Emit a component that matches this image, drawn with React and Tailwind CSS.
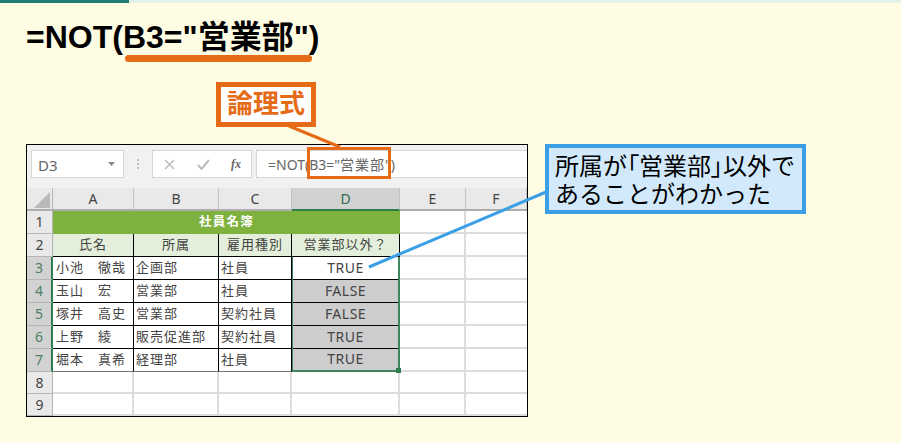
const jp = 'font-["Liberation_Sans","Noto_Sans_CJK_JP",sans-serif]'

const rows = [
  ['小池　徹哉', '企画部', '社員', 'TRUE'],
  ['玉山　宏', '営業部', '社員', 'FALSE'],
  ['塚井　高史', '営業部', '契約社員', 'FALSE'],
  ['上野　綾', '販売促進部', '契約社員', 'TRUE'],
  ['堀本　真希', '経理部', '社員', 'TRUE'],
]

const columns = ['A', 'B', 'C', 'D', 'E', 'F']

function RowHead({ n, active }) {
  return (
    <div className={`flex items-center justify-center pb-[1px] border-b border-[#b5b5b5] text-[14px] ${active ? 'bg-[#d2d2d2] text-[#4f7f64] border-r-2 border-r-[#2f7d4f]' : 'bg-[#e9e9e9] text-[#444] border-r border-r-[#b5b5b5]'}`}>
      {n}
    </div>
  )
}

function Blank({ last }) {
  return <div className={`bg-white border-b-2 border-[#dcdcdc] ${last ? '' : 'border-r-2'}`} />
}

function Sheet() {
  return (
    <div className="grid grid-cols-[26px_81px_85px_73px_108px_66px_61px] grid-rows-[23px_23px_23px_23px_23px_23px_23px_22px_22px] font-['Noto_Sans','Noto_Sans_CJK_JP',sans-serif] text-[13px] text-[#444]">
      {/* row 1 */}
      <RowHead n={1} />
      <div className="col-span-4 flex items-center justify-center pb-[1px] bg-[#7fb13f] font-bold text-white text-[12.5px] tracking-[1.2px]">社員名簿</div>
      <Blank />
      <Blank last />

      {/* row 2 */}
      <RowHead n={2} />
      <div className="flex items-center justify-center pb-[1px] bg-[#e3efda] border-r border-b border-black tracking-[1px]">氏名</div>
      <div className="flex items-center justify-center pb-[1px] bg-[#e3efda] border-r border-b border-black tracking-[1px]">所属</div>
      <div className="flex items-center justify-center pb-[1px] bg-[#e3efda] border-r border-b border-black tracking-[1px]">雇用種別</div>
      <div className="flex items-center justify-center pb-[1px] bg-[#e3efda] border-r border-b border-black tracking-[1px]">営業部以外？</div>
      <Blank />
      <Blank last />

      {/* rows 3-7 */}
      {rows.map((r, i) => (
        <div key={i} className="contents">
          <RowHead n={i + 3} active />
          <div className={`flex items-center pb-[1px] pl-[3px] bg-white border-r border-black tracking-[1px] whitespace-nowrap overflow-hidden ${i === 4 ? 'border-b border-b-[#777]' : 'border-b'}`}>{r[0]}</div>
          <div className={`flex items-center pb-[1px] pl-[2px] bg-white border-r border-black tracking-[1px] whitespace-nowrap overflow-hidden ${i === 4 ? 'border-b border-b-[#777]' : 'border-b'}`}>{r[1]}</div>
          <div className={`flex items-center pb-[1px] pl-[2px] bg-white border-r border-black tracking-[1px] whitespace-nowrap overflow-hidden ${i === 4 ? 'border-b border-b-[#777]' : 'border-b'}`}>{r[2]}</div>
          <div className={`flex items-center justify-center pb-[3px] border-l border-r-2 border-[#3f8560] text-[14px] ${i === 0 ? 'bg-white' : 'bg-[#cdcdcd]'} ${i === 4 ? 'border-b-2' : 'border-b-0'} relative tracking-[0.5px]`}>
            {r[3]}
            {i < 4 && <span className="absolute left-0 right-0 bottom-0 h-px bg-black" />}
            {i === 4 && <span className="absolute right-[-3px] bottom-[-3px] w-[5px] h-[5px] bg-[#2f7d4f]" />}
          </div>
          <Blank />
          <Blank last />
        </div>
      ))}

      {/* rows 8-9 */}
      {[8, 9].map((n) => (
        <div key={n} className="contents">
          <RowHead n={n} />
          <Blank />
          <Blank />
          <Blank />
          <Blank />
          <Blank />
          <Blank last />
        </div>
      ))}
    </div>
  )
}

export default function App() {
  return (
    <div className={`relative w-[901px] h-[443px] overflow-hidden bg-[#fefce3] ${jp}`}>
      {/* top progress strip */}
      <div className="flex h-[3px]">
        <div className="w-[129px] bg-[#1f7f78]" />
        <div className="flex-1 bg-[#e4f3ea]" />
      </div>

      <h1 className="mt-[15px] ml-[26px] text-[32px] leading-[38px] font-bold text-black">=NOT(B3="営業部")</h1>

      {/* underline below the logical test */}
      <div className="absolute left-[125px] top-[55px] w-[187px] h-[7px] rounded-full bg-[#e66b17]" />

      <div className="absolute left-[216px] top-[82px] w-[100px] h-[45px] flex items-center justify-center bg-white border-[5px] border-[#e66b17] text-[26px] font-bold text-[#e66b17]">論理式</div>

      {/* spreadsheet window */}
      <div className="mt-[88px] ml-[26px] w-[502px] h-[273px] border border-black bg-[#f1f1f1] overflow-hidden">
        <div className="flex h-[43px] pt-[5px] items-start">
          <div className="ml-[4px] w-[93px] h-[28px] flex items-center justify-between pl-[6px] pr-[7px] pt-[3px] bg-white border border-[#d6d6d6] text-[15px] font-['Noto_Sans',sans-serif] text-[#666]">
            D3
            <svg className="mb-[3px]" width="8" height="5" viewBox="0 0 8 5"><path d="M0 0h7L3.5 4z" fill="#8a8a8a" /></svg>
          </div>
          <div className="w-[28px] h-[28px] flex flex-col items-center justify-center gap-[2px]">
            <span className="w-[2px] h-[2px] bg-[#c0c0c0]" />
            <span className="w-[2px] h-[2px] bg-[#c0c0c0]" />
            <span className="w-[2px] h-[2px] bg-[#c0c0c0]" />
          </div>
          <div className="w-[100px] h-[28px] flex items-center bg-white border border-[#d6d6d6]">
            <svg className="ml-[11px]" width="11" height="11" viewBox="0 0 11 11"><path d="M1 1l9 9M10 1l-9 9" stroke="#bdbdbd" strokeWidth="1.6" /></svg>
            <svg className="ml-[22px]" width="13" height="11" viewBox="0 0 13 11"><path d="M1 6l3.5 4L12 1" stroke="#bdbdbd" strokeWidth="2" fill="none" /></svg>
            <span className="ml-[21px] font-['Liberation_Serif',serif] italic font-bold text-[12px] text-[#666]">fx</span>
          </div>
          <div className="ml-[4px] flex-1 h-[28px] flex items-center pl-[11px] bg-white border-y border-l border-[#d6d6d6] font-['Noto_Sans','Noto_Sans_CJK_JP',sans-serif] text-[14px] text-[#666] whitespace-nowrap">=NOT(B3="<span className="tracking-[1px]">営業部</span>")</div>
        </div>

        {/* column headers */}
        <div className="flex h-[23px] border-b-2 border-[#aeaeae] bg-[#e9e9e9] font-['Noto_Sans',sans-serif] text-[14px] text-[#444]">
          <div className="w-[26px] flex items-end justify-end pr-[1px] pb-[1px] border-r border-[#b5b5b5]">
            <svg width="17" height="16" viewBox="0 0 17 16"><path d="M16 0v16H0z" fill="#b9b9b9" /></svg>
          </div>
          {columns.map((c, i) => (
            <div
              key={c}
              className={`flex items-center justify-center border-r border-[#c4c4c4] ${['w-[81px]', 'w-[85px]', 'w-[73px]', 'w-[108px]', 'w-[66px]', 'w-[61px]'][i]} ${c === 'D' ? 'bg-[#d2d2d2] text-[#2f6f4a] border-b-2 border-b-[#2f7d4f] h-[23px]' : ''}`}
            >
              {c}
            </div>
          ))}
        </div>

        <Sheet />
      </div>

      {/* highlight on the formula bar */}
      <div className="absolute left-[307px] top-[147px] w-[84px] h-[32px] border-[3px] border-[#e66b17]" />

      {/* leader lines */}
      <svg className="absolute left-0 top-0 pointer-events-none" width="901" height="443">
        <path d="M289 126L340 147" stroke="#e66b17" strokeWidth="3" />
        <path d="M546 192L369 267" stroke="#3a9fe5" strokeWidth="3" />
      </svg>

      {/* result callout */}
      <div className="absolute left-[545px] top-[144px] w-[261px] h-[70px] pl-[6px] pt-[5px] bg-[#d2e9fb] border-[4px] border-[#3a9fe5] text-[24px] leading-[28px] text-black whitespace-nowrap">
        所属が<span className="[font-feature-settings:'palt']">「</span>営業部<span className="[font-feature-settings:'palt']">」</span>以外で<br />あることがわかった
      </div>
    </div>
  )
}
